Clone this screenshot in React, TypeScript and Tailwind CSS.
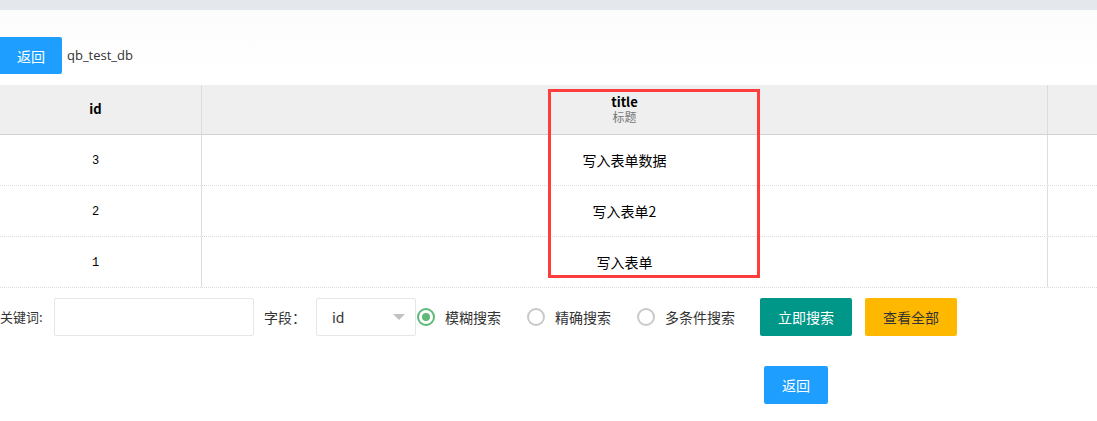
const rows = [
	{ id: "3", title: "写入表单数据" },
	{ id: "2", title: "写入表单2" },
	{ id: "1", title: "写入表单" },
];

const radios = [
	{ label: "模糊搜索", checked: true },
	{ label: "精确搜索" },
	{ label: "多条件搜索" },
];

export default function App() {
	return (
		<div className="relative min-h-screen w-[1097px] overflow-hidden bg-white font-['Noto_Sans_CJK_SC',sans-serif] text-sm text-[#333]">
			<div className="h-[10px] bg-[#e4e7ec]" />
			<div className="bg-gradient-to-b from-[#fcfcfc] to-white pt-[27px]">
				<div className="flex items-center">
					<button
						type="button"
						className="flex h-[37px] w-[62px] items-center justify-center rounded-r-[2px] bg-[#1e9fff] text-white"
					>
						返回
					</button>
					<span className="ml-[5px] font-['Open_Sans',sans-serif] text-[13px] text-[#333]">qb_test_db</span>
				</div>
			</div>

			<div className="mt-[11px]">
				<div className="grid h-[50px] grid-cols-[202px_846px_1fr] border-b border-[#d2d2d2] bg-[#efefef]">
					<div className="flex items-center justify-center border-r border-[#ddd] pr-[10px] text-[13px] font-bold text-black">
						id
					</div>
					<div className="flex flex-col items-center justify-center gap-px border-r border-[#ddd]">
						<span className="text-[13px] font-bold leading-[14px] text-black">title</span>
						<span className="text-[12px] leading-[14px] text-[#777]">标题</span>
					</div>
					<div />
				</div>
				{rows.map((row) => (
					<div
						key={row.id}
						className="grid h-[51px] grid-cols-[202px_846px_1fr] border-b border-dotted border-[#ddd] text-black"
					>
						<div className="flex items-center justify-center border-r border-solid border-[#ddd] pr-[10px] pt-[4px] font-['Liberation_Mono',monospace] text-[12px]">
							{row.id}
						</div>
						<div className="flex items-center justify-center border-r border-solid border-[#ddd] text-[14px]">
							{row.title}
						</div>
						<div />
					</div>
				))}
			</div>

			<div className="mt-[10px] flex h-[38px] items-center">
				<span className="w-[44px] whitespace-nowrap text-[13px] text-[#333]">关键词:</span>
				<input className="ml-[10px] h-[38px] w-[200px] rounded-[2px] border border-[#e6e6e6] bg-white px-2 outline-none" />
				<span className="ml-[10px] whitespace-nowrap text-[#333]">字段：</span>
				<div className="ml-[10px] flex h-[38px] w-[100px] items-center justify-between rounded-[2px] border border-[#e6e6e6] pl-[15px] pr-[10px]">
					<span>id</span>
					<span className="h-0 w-0 border-x-[6px] border-t-[6px] border-x-transparent border-t-[#c2c2c2]" />
				</div>
				<div className="ml-px flex items-center">
					{radios.map((r) => (
						<label key={r.label} className="mr-[26px] flex items-center gap-[10px] whitespace-nowrap">
							<span
								className={`flex h-[18px] w-[18px] items-center justify-center rounded-full border-2 ${
									r.checked ? "border-[#5fb878]" : "border-[#c9c9c9]"
								}`}
							>
								{r.checked && <span className="h-2 w-2 rounded-full bg-[#5fb878]" />}
							</span>
							<span className="text-[#333]">{r.label}</span>
						</label>
					))}
				</div>
				<button
					type="button"
					className="-ml-px flex h-[38px] w-[92px] items-center justify-center rounded-[2px] bg-[#009688] text-white"
				>
					立即搜索
				</button>
				<button
					type="button"
					className="ml-[13px] flex h-[38px] w-[92px] items-center justify-center rounded-[2px] bg-[#ffb800] text-[#333]"
				>
					查看全部
				</button>
			</div>

			<div className="mt-[30px] pl-[764px]">
				<button
					type="button"
					className="flex h-[38px] w-[64px] items-center justify-center rounded-[2px] bg-[#1e9fff] text-white"
				>
					返回
				</button>
			</div>

			<div className="pointer-events-none absolute left-[548px] top-[89px] h-[189px] w-[212px] border-[3px] border-[#ff3d3d]" />
		</div>
	);
}
